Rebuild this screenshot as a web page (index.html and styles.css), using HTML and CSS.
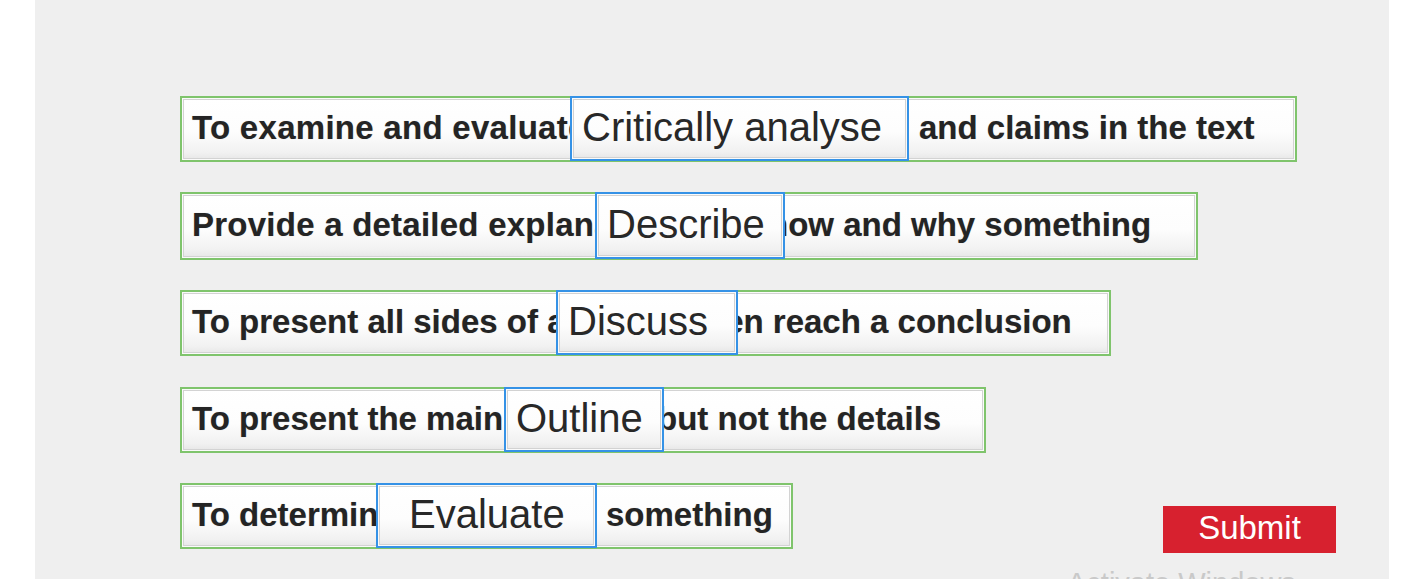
FILE: index.html
```html
<!DOCTYPE html>
<html lang="en">
<head>
<meta charset="utf-8">
<title>Drag and drop</title>
<link rel="stylesheet" href="styles.css">
</head>
<body>
<main class="stage">
  <div class="rows">
    <div class="row row-1">
      <span class="seg seg-left">To examine and evaluate the</span>
      <div class="tile">Critically analyse</div>
      <span class="seg seg-right"><span class="seg-text">and claims in the text</span></span>
    </div>
    <div class="row row-2">
      <span class="seg seg-left">Provide a detailed explanation</span>
      <div class="tile">Describe</div>
      <span class="seg seg-right"><span class="seg-text">how and why something</span></span>
    </div>
    <div class="row row-3">
      <span class="seg seg-left">To present all sides of an</span>
      <div class="tile">Discuss</div>
      <span class="seg seg-right"><span class="seg-text">then reach a conclusion</span></span>
    </div>
    <div class="row row-4">
      <span class="seg seg-left">To present the main points</span>
      <div class="tile">Outline</div>
      <span class="seg seg-right"><span class="seg-text">but not the details</span></span>
    </div>
    <div class="last-line">
      <div class="row row-5">
        <span class="seg seg-left">To determine the value of</span>
        <div class="tile">Evaluate</div>
        <span class="seg seg-right"><span class="seg-text">something</span></span>
      </div>
      <button class="submit" type="button">Submit</button>
    </div>
  </div>
  <div class="watermark">Activate Windows</div>
</main>
</body>
</html>
```
FILE: styles.css
```css
html, body {
  margin: 0;
  padding: 0;
  background: #ffffff;
  height: 579px;
  overflow: hidden;
}

.stage {
  position: relative;
  box-sizing: border-box;
  margin-left: 35px;
  width: 1354px;
  height: 579px;
  background: #efefef;
  padding: 96px 53px 0 145px;
  font-family: "Liberation Sans", Arial, sans-serif;
}

.rows {
  display: flex;
  flex-direction: column;
  gap: 30px;
}

.row {
  box-sizing: border-box;
  display: flex;
  align-items: stretch;
  height: 66px;
  border: 2px solid #7fc46c;
  background: linear-gradient(to bottom, #ffffff 0%, #fdfdfd 55%, #f1f1f1 88%, #e6e6e6 100%);
  box-shadow: inset 0 0 0 1px #fafafa, inset 0 0 0 2px #d3d3d3;
}

.row-1 { width: 1117px; }
.row-2 { width: 1018px; height: 68px; }
.row-3 { width: 931px; }
.row-4 { width: 806px; margin-top: 1px; }
.row-5 { width: 613px; }

.seg {
  display: flex;
  align-items: center;
  overflow: hidden;
  white-space: nowrap;
  font-size: 33px;
  font-weight: bold;
  color: #242424;
  text-shadow: 0 0 1px rgba(0, 0, 0, 0.25);
  padding-bottom: 3px;
  box-sizing: border-box;
}

.seg-left {
  flex: 0 0 auto;
  padding-left: 10px;
}

.row-1 .seg-left { width: 388px; letter-spacing: 0.28px; }
.row-2 .seg-left { width: 413px; letter-spacing: 0.24px; }
.row-3 .seg-left { width: 374px; }
.row-4 .seg-left { width: 322px; }
.row-5 .seg-left { width: 194px; }

.seg-right {
  flex: 1 1 auto;
  min-width: 0;
}

.seg-text {
  flex: 0 0 auto;
}

.row-1 .seg-text { margin-left: 10px; }
.row-2 .seg-text { margin-left: -17px; }
.row-3 .seg-text { margin-left: -44px; }
.row-4 .seg-text { margin-left: -7px; }
.row-5 .seg-text { margin-left: 9px; }

.tile {
  box-sizing: border-box;
  flex: 0 0 auto;
  display: flex;
  align-items: center;
  margin: -2px 0 -1px;
  padding: 0 0 3px 10px;
  border: 2px solid #3592e6;
  background: linear-gradient(to bottom, #ffffff 0%, #fdfdfd 55%, #f1f1f1 88%, #e6e6e6 100%);
  box-shadow: inset 0 0 0 1px #fafafa, inset 0 0 0 2px #d2d2d2;
  font-size: 40px;
  color: #282828;
  white-space: nowrap;
  position: relative;
}

.row-1 .tile { width: 339px; }
.row-2 .tile { width: 190px; }
.row-3 .tile { width: 182px; }
.row-4 .tile { width: 160px; }
.row-5 .tile { width: 221px; padding-left: 31px; }

.last-line {
  display: flex;
  justify-content: space-between;
  align-items: flex-start;
}

.submit {
  margin-top: 23px;
  width: 173px;
  height: 47px;
  border: 0;
  border-radius: 0;
  padding: 0 0 3px;
  background: #d7212f;
  color: #ffffff;
  font-family: "Liberation Sans", Arial, sans-serif;
  font-size: 33px;
  cursor: pointer;
}

.watermark {
  position: absolute;
  left: 1032px;
  top: 569px;
  font-size: 29px;
  line-height: 1;
  color: #c9c9c9;
  white-space: nowrap;
  font-family: "Liberation Sans", Arial, sans-serif;
}
```
